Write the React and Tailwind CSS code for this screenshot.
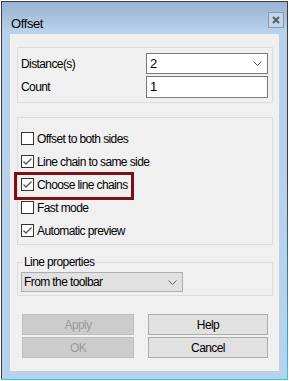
import React from 'react'

const font = { fontFamily: '"Liberation Sans", Arial, sans-serif' }

function Chevron() {
  return (
    <svg width="9" height="5" viewBox="0 0 9 5" className="shrink-0">
      <path d="M0.5 0.5 L4.5 4.5 L8.5 0.5" fill="none" stroke="#606060" strokeWidth="1" />
    </svg>
  )
}

function Checkbox({ checked, label }) {
  return (
    <div className="flex h-[23px] items-center gap-[3px]">
      <span className="flex size-[13px] items-center justify-center border border-[#333] bg-white">
        {checked && (
          <svg width="11" height="11" viewBox="0 0 11 11">
            <path d="M1.5 5.5 L4 8 L9.5 2.5" fill="none" stroke="#555" strokeWidth="1.3" />
          </svg>
        )}
      </span>
      <span className="text-[12px] tracking-[-0.6px] text-black">{label}</span>
    </div>
  )
}

function Button({ children, disabled }) {
  return (
    <div
      className={
        disabled
          ? 'flex h-[21px] items-center justify-center border border-[#bfbfbf] bg-[#cccccc] text-[12px] tracking-[-0.6px] text-[#9a9a9a]'
          : 'flex h-[21px] items-center justify-center border border-[#adadad] bg-[#e1e1e1] text-[12px] tracking-[-0.6px] text-black'
      }
    >
      {children}
    </div>
  )
}

export default function App() {
  return (
    <div className="h-[381px] w-[289px] bg-white" style={font}>
      <div className="ml-px mt-px h-[379px] w-[287px] bg-[linear-gradient(#3c3c3c,#3c3c3c_45%,#2ec4ec)] pb-px pr-px">
        <div className="flex h-full flex-col border-l border-t border-[#3c3c3c] bg-[#b9d1ea]">
          {/* title bar */}
          <div className="flex h-[32px] items-start justify-between bg-gradient-to-b from-[#98b4d2] to-[#bcd3eb] pl-[9px] pr-[3px]">
            <span className="mt-[14px] text-[13px] leading-[16px] tracking-[-0.4px] text-black">Offset</span>
            <span className="mt-[10px] flex size-[16px] items-center justify-center border border-[#8499b3] bg-[#c6d5e6]">
              <svg width="8" height="8" viewBox="0 0 8 8">
                <path d="M1 1 L7 7 M7 1 L1 7" stroke="#4f5e70" strokeWidth="2" />
              </svg>
            </span>
          </div>

          {/* client */}
          <div className="ml-[8px] flex h-[337px] w-[269px] flex-col bg-[#f0f0f0] text-[12px]">
            <div className="ml-[7px] mr-[6px] mt-[13px] h-[56px] border border-[#dcdcdc] pl-[3px] pr-[4px] pt-[5px]">
              <div className="flex items-center justify-between">
                <span className="tracking-[-0.6px]">Distance(s)</span>
                <div className="flex h-[21px] w-[122px] items-center justify-between border border-[#7a7a7a] bg-white pl-[3px] pr-[5px]">
                  <span className="text-[13px]">2</span>
                  <Chevron />
                </div>
              </div>
              <div className="mt-[2px] flex items-center justify-between">
                <span className="tracking-[-0.6px]">Count</span>
                <div className="flex h-[22px] w-[122px] items-center border border-[#7a7a7a] bg-white pl-[3px]">
                  <span className="text-[13px]">1</span>
                </div>
              </div>
            </div>

            <div className="relative ml-[7px] mr-[6px] mt-[14px] h-[128px] border border-[#dcdcdc] pl-[3px] pt-[9px]">
              <Checkbox label="Offset to both sides" />
              <Checkbox checked label="Line chain to same side" />
              <Checkbox checked label="Choose line chains" />
              <Checkbox label="Fast mode" />
              <Checkbox checked label="Automatic preview" />
              <div className="absolute left-[-4px] top-[54px] h-[28px] w-[120px] border-[3px] border-[#7b1114]" />
            </div>

            <fieldset className="ml-[7px] mr-[6px] mt-[10px] border border-[#dcdcdc] px-[3px] pb-[3px] pt-[3px]">
              <legend className="ml-[2px] px-px text-[12px] leading-[14px] tracking-[-0.6px]">Line properties</legend>
              <div className="flex h-[20px] w-[162px] items-center justify-between border border-[#adadad] bg-[#e1e1e1] pl-[2px] pr-[5px]">
                <span className="tracking-[-0.6px]">From the toolbar</span>
                <Chevron />
              </div>
            </fieldset>

            <div className="ml-[12px] mt-[18px] grid grid-cols-[112px_120px] gap-x-[14px] gap-y-[2px]">
              <Button disabled>Apply</Button>
              <Button>Help</Button>
              <Button disabled>OK</Button>
              <Button>Cancel</Button>
            </div>
          </div>
        </div>
      </div>
    </div>
  )
}
